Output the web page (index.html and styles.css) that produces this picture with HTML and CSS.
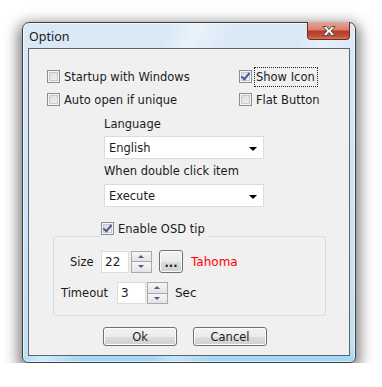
FILE: index.html
```html
<!DOCTYPE html>
<html lang="en">
  <head>
    <meta charset="UTF-8" />
    <title>Option</title>
    <link rel="stylesheet" href="styles.css">
  </head>
  <body>
    <div class="window">
      <div class="titlebar">
        <span class="title">Option</span>
        <div class="close">
          <svg width="16" height="12" viewBox="0 0 16 12">
            <path d="M2 1.5 L5.5 1.5 L8 4.5 L10.5 1.5 L14 1.5 L10 6 L14 10.5 L10.5 10.5 L8 7.5 L5.5 10.5 L2 10.5 L6 6 Z" fill="#fff" stroke="#5a4a4a" stroke-width="1" stroke-linejoin="round" />
          </svg>
        </div>
      </div>
      <div class="client">
        <div class="checks">
          <label class="check"><span class="box"></span>Startup with Windows</label>
          <label class="check"><span class="box checked"></span><span class="focus">Show Icon</span></label>
          <label class="check"><span class="box"></span>Auto open if unique</label>
          <label class="check"><span class="box"></span>Flat Button</label>
        </div>

        <div class="selects">
          <div class="caption">Language</div>
          <div class="combo">English<span class="arrow"></span></div>
          <div class="caption second">When double click item</div>
          <div class="combo last">Execute<span class="arrow"></span></div>
        </div>

        <div class="osd">
          <label class="check legend"><span class="box checked"></span>Enable OSD tip</label>
          <div class="group">
            <div class="row">
              <span class="lbl size-lbl">Size</span>
              <div class="num">22</div>
              <div class="spin"><span class="up"></span><span class="down"></span></div>
              <div class="dots">...</div>
              <span class="font-name">Tahoma</span>
            </div>
            <div class="row timeout">
              <span class="lbl timeout-lbl">Timeout</span>
              <div class="num wide">3</div>
              <div class="spin near"><span class="up"></span><span class="down"></span></div>
              <span class="unit">Sec</span>
            </div>
          </div>
        </div>

        <div class="buttons">
          <div class="btn">Ok</div>
          <div class="btn">Cancel</div>
        </div>
      </div>
    </div>
  </body>
</html>
```

FILE: styles.css
```css
body {
  margin: 0;
  padding: 22px 0 0 22px;
  background: #fff;
  font-family: "DejaVu Sans", Verdana, sans-serif;
  font-size: 11.5px;
  color: #1b1b1b;
}
.window {
  box-sizing: border-box;
  width: 334px;
  height: 341px;
  border: 1px solid #3c3f44;
  border-radius: 7px 7px 6px 6px;
  padding: 0 5px 6px 5px;
  background:
    linear-gradient(115deg, rgba(255,255,255,0) 30%, rgba(255,255,255,0.45) 36%, rgba(255,255,255,0) 44%, rgba(255,255,255,0) 58%, rgba(255,255,255,0.35) 63%, rgba(255,255,255,0) 70%),
    linear-gradient(180deg, #dbe9f6 0%, #cfe2f3 60%, #bfe0f5 95%, #9fd6f2 100%);
  box-shadow: 0 5px 14px 4px rgba(0, 0, 0, 0.5), inset 0 0 0 1px rgba(255,255,255,0.6);
  display: flex;
  flex-direction: column;
}
.titlebar {
  height: 25px;
  display: flex;
  align-items: flex-start;
}
.title {
  font-family: "Noto Sans", "Open Sans", sans-serif;
  font-size: 12.5px;
  color: #1a1a1a;
  margin: 5px 0 0 1px;
}
.close {
  margin: -1px 0 0 auto;
  width: 43px;
  height: 18px;
  box-sizing: border-box;
  border: 1px solid #6e2a22;
  border-top: none;
  border-radius: 0 0 4px 4px;
  background: linear-gradient(180deg, #e3a79b 0%, #d7806f 45%, #b93a26 55%, #c4503a 85%, #d97a5c 100%);
  display: flex;
  justify-content: center;
  align-items: center;
}
.client {
  flex: 1;
  border: 1px solid #5d6670;
  background: #f0f0f0;
  padding-top: 16px;
}
.checks {
  display: grid;
  grid-template-columns: 192px auto;
  grid-auto-rows: 23px;
  padding-left: 18px;
}
.check {
  display: flex;
  align-items: center;
  white-space: nowrap;
}
.box {
  box-sizing: border-box;
  width: 13px;
  height: 13px;
  border: 1px solid #8e8f8f;
  background: linear-gradient(135deg, #d8d8d8 0%, #f6f6f6 100%);
  box-shadow: inset 0 0 0 1px #f4f4f4, inset 0 0 0 2px #c9c9c9;
  margin-right: 4px;
  flex: none;
  position: relative;
}
.box.checked::after {
  content: "";
  position: absolute;
  left: 3px;
  top: 0px;
  width: 3px;
  height: 7px;
  border: solid #46599a;
  border-width: 0 2px 2px 0;
  transform: rotate(40deg);
}
.focus {
  outline: 1px dotted #222;
  outline-offset: 1px;
  padding: 1px 1px 1px 0;
}
.selects {
  margin-left: 75px;
  width: 160px;
}
.caption {
  line-height: 16px;
  margin-top: 5px;
}
.caption.second {
  margin-top: 4px;
}
.combo {
  box-sizing: border-box;
  height: 23px;
  margin-top: 4px;
  border: 1px solid #dcdcdc;
  background: #fff;
  padding-left: 4px;
  display: flex;
  align-items: center;
  position: relative;
}
.combo.last {
  margin-top: 5px;
}
.arrow {
  position: absolute;
  right: 6px;
  top: 10px;
  border: 4px solid transparent;
  border-top: 4px solid #000;
  border-bottom: none;
}
.osd {
  margin-top: 13px;
}
.legend {
  position: relative;
  z-index: 1;
  display: inline-flex;
  height: 17px;
  margin-left: 72px;
  padding-right: 3px;
  background: #f0f0f0;
}
.group {
  box-sizing: border-box;
  margin: -2px 0 0 24px;
  width: 273px;
  height: 80px;
  border: 1px solid #d5dde3;
  border-radius: 3px;
  padding-top: 13px;
}
.row {
  display: flex;
  align-items: center;
  height: 23px;
}
.row.timeout {
  margin-top: 9px;
  height: 22px;
}
.lbl {
  box-sizing: border-box;
  flex: none;
}
.size-lbl {
  width: 47px;
  padding-left: 16px;
}
.timeout-lbl {
  width: 63px;
  padding-left: 7px;
}
.num {
  box-sizing: border-box;
  width: 28px;
  height: 22px;
  border: 1px solid #dcdcdc;
  background: #fff;
  padding-left: 3px;
  display: flex;
  align-items: center;
  font-size: 12px;
}
.num.wide {
  width: 29px;
}
.spin {
  margin-left: 2px;
  width: 21px;
  height: 22px;
  display: flex;
  flex-direction: column;
}
.spin.near {
  margin-left: 1px;
}
.spin span {
  box-sizing: border-box;
  flex: 1;
  border: 1px solid #a9a9a9;
  background: linear-gradient(180deg, #f7f7f7, #e4e4e4);
  position: relative;
}
.spin .down {
  border-top: none;
}
.spin span::after {
  content: "";
  position: absolute;
  left: 6px;
  top: 3px;
  border: 3px solid transparent;
}
.spin .up::after {
  border-bottom: 3px solid #4b5d8c;
  border-top: none;
}
.spin .down::after {
  top: 3px;
  border-top: 3px solid #4b5d8c;
  border-bottom: none;
}
.dots {
  box-sizing: border-box;
  margin-left: 7px;
  width: 24px;
  height: 23px;
  border: 1px solid #707070;
  border-radius: 3px;
  background: linear-gradient(180deg, #f2f2f2 0%, #ebebeb 50%, #dddddd 51%, #cfcfcf 100%);
  box-shadow: inset 0 0 0 1px #fcfcfc;
  display: flex;
  justify-content: center;
  align-items: flex-end;
  padding-bottom: 4px;
  line-height: 10px;
  font-weight: bold;
}
.font-name {
  margin-left: 8px;
  color: #ff0000;
  font-size: 12px;
}
.unit {
  margin-left: 7px;
  font-size: 12px;
}
.buttons {
  display: flex;
  gap: 16px;
  margin: 11px 0 0 74px;
}
.btn {
  box-sizing: border-box;
  width: 74px;
  height: 19px;
  border: 1px solid #707070;
  border-radius: 3px;
  background: linear-gradient(180deg, #f2f2f2 0%, #ebebeb 50%, #dddddd 51%, #cfcfcf 100%);
  box-shadow: inset 0 0 0 1px #fcfcfc;
  display: flex;
  justify-content: center;
  align-items: center;
}
```
